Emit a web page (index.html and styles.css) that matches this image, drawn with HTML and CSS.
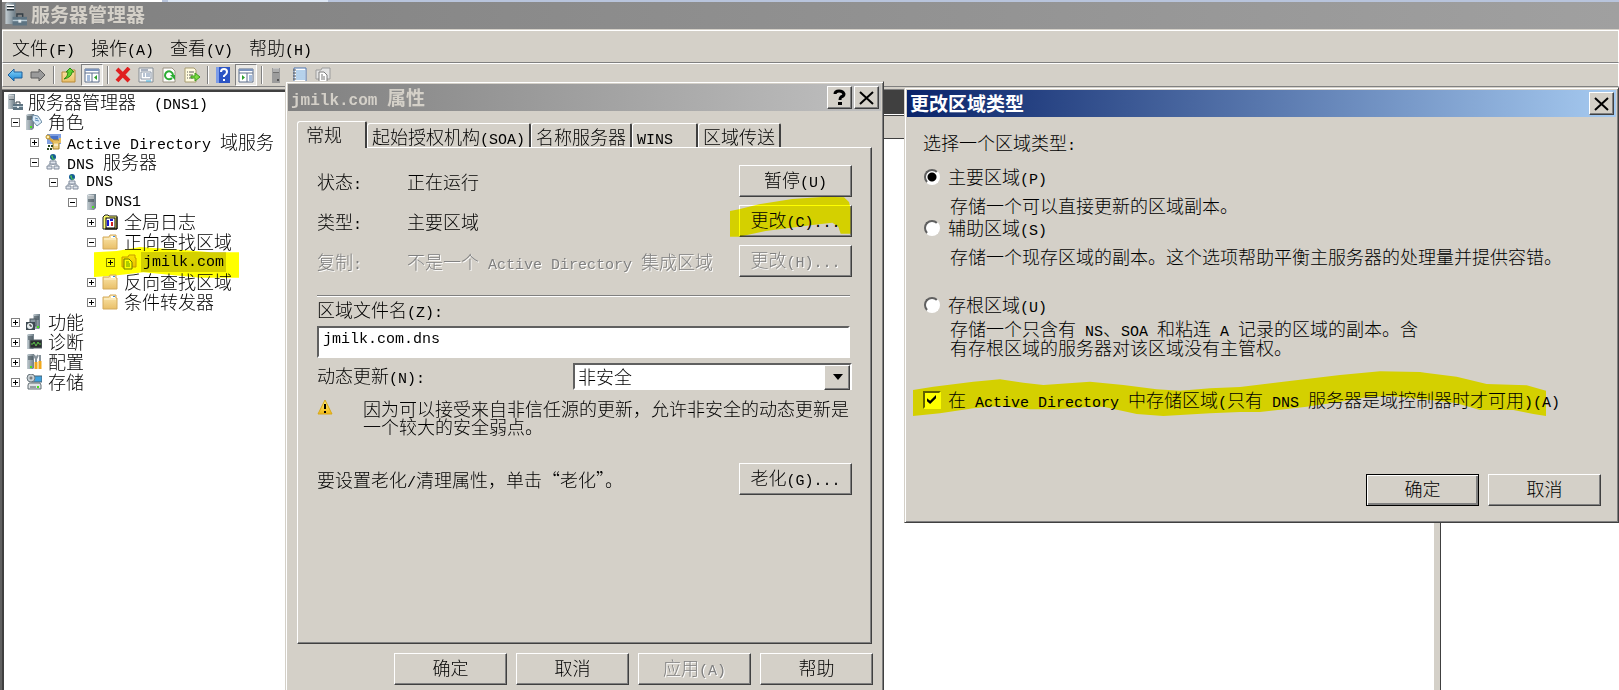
FILE: index.html
```html
<!DOCTYPE html>
<html lang="zh-CN">

<head>
    <meta charset="utf-8">
    <title>服务器管理器</title>
    <link rel="stylesheet" href="styles.css">
</head>

<body>

<!-- shared icons -->
<svg class="defs" width="0" height="0">
    <defs>
        <linearGradient id="gsrv" x1="0" x2="1"><stop offset="0" stop-color="#c3cdd2"/><stop offset="1" stop-color="#6c7c86"/></linearGradient>
        <linearGradient id="gfold" x1="0" y1="0" x2="0" y2="1"><stop offset="0" stop-color="#fbe7ae"/><stop offset="1" stop-color="#e9bf68"/></linearGradient>
        <linearGradient id="gblue" x1="0" y1="0" x2="0" y2="1"><stop offset="0" stop-color="#8fdcff"/><stop offset="1" stop-color="#1480d0"/></linearGradient>
        <linearGradient id="gwarn" x1="0" y1="0" x2="0" y2="1"><stop offset="0" stop-color="#fff27a"/><stop offset="1" stop-color="#f0b818"/></linearGradient>
        <symbol id="server" viewBox="0 0 16 16">
            <path d="M4 1l2-1h7v14l-2 2H4z" fill="url(#gsrv)"/>
            <path d="M5 3h6M5 5h6M5 7h6" stroke="#37444c"/>
            <path d="M5 2h6M5 4h6" stroke="#fff"/>
            <rect x="9" y="12" width="2" height="2" fill="#49e020"/>
        </symbol>
        <symbol id="manager" viewBox="0 0 16 16">
            <path d="M1 1l1-1h6v14l-1 1H1z" fill="url(#gsrv)"/>
            <path d="M2 3h5M2 5h5" stroke="#26333b"/>
            <path d="M2 2h5M2 4h5" stroke="#fff"/>
            <path d="M9 10V8h4v2" fill="none" stroke="#333e46"/>
            <rect x="6" y="10" width="10" height="6" fill="#5e7482"/>
            <path d="M6 12.500h10" stroke="#b6c8d2"/>
            <rect x="10" y="12" width="2" height="2" fill="#e8eef0"/>
        </symbol>
        <symbol id="role" viewBox="0 0 16 16">
            <path d="M0 1l2-1h6v14l-2 2H0z" fill="url(#gsrv)"/>
            <path d="M1 3h5M1 5h5" stroke="#37444c"/>
            <path d="M7 1l5 1 4 6-5 4-5-6z" fill="#dcecf8" stroke="#6d8ca4"/>
            <path d="M9 4l3 1M9 6l4 1" stroke="#5b8cb8"/>
            <rect x="4" y="12" width="2" height="2" fill="#49e020"/>
        </symbol>
        <symbol id="ad" viewBox="0 0 16 16">
            <rect x="2" y="0" width="14" height="10" fill="#7f9fe0"/>
            <path d="M5 2h8v4H7z" fill="#4570c8"/>
            <path d="M8 6h6v9H8z" fill="#eed28a" stroke="#a88228"/>
            <path d="M6 5l3 3h6V4" stroke="#e8c060" stroke-width="2" fill="none"/>
            <path d="M3 3l5 5" stroke="#dba43a" stroke-width="2"/>
            <circle cx="3" cy="3" r="2" fill="#fff0b0" stroke="#b98a20"/>
            <path d="M9 11h4" stroke="#fff"/>
            <path d="M3 11h2v2H3zM6 11h2v2H6zM2 14h2v2H2zM5 14h2v2H5z" fill="#2c4a24"/>
        </symbol>
        <symbol id="dns" viewBox="0 0 16 16">
            <path d="M8 6v5M4 12v-2h8v2" stroke="#8b97a6" fill="none"/>
            <circle cx="8" cy="3" r="3" fill="#145c94"/>
            <path d="M6 2q2-2 2 1t2 1q0 2-2 2z" fill="#4cc050"/>
            <path d="M5 7h6v3H5zM2 12h5v3H2zM9 12h5v3H9z" fill="#dfe4ec" stroke="#818c9c"/>
        </symbol>
        <symbol id="log" viewBox="0 0 16 16">
            <path d="M1 3l2-2h3l1 1h8v13H1z" fill="#ffff70" stroke="#222"/>
            <rect x="4" y="4" width="9" height="10" fill="#fff" stroke="#000"/>
            <path d="M6 6v6M8 6h3" stroke="#1a1ad0" stroke-width="2"/>
            <path d="M10 8v4" stroke="#d02020" stroke-width="2"/>
            <path d="M15 3v12H3" stroke="#000" fill="none"/>
        </symbol>
        <symbol id="folder" viewBox="0 0 16 16">
            <path d="M1 3h6l1-2h6v3h1v11H1z" fill="url(#gfold)" stroke="#d3aa5c"/>
            <path d="M9 2h4v2H9z" fill="#fff"/>
            <path d="M11 2h2v1h-2z" fill="#3c8ce0"/>
            <path d="M2 5h12" stroke="#fff6d8"/>
        </symbol>
        <symbol id="zone" viewBox="0 0 16 16">
            <path d="M1 3h6l1-2h6v3h1v9H1z" fill="url(#gfold)" stroke="#c79a48"/>
            <path d="M3 5h5l3 3v7H3z" fill="#fff" stroke="#6d7a58"/>
            <path d="M5 8h3M5 10h4M5 12h4" stroke="#5b9a60"/>
        </symbol>
        <symbol id="feature" viewBox="0 0 16 16">
            <path d="M7 1l1-1h6v14l-1 1H7z" fill="url(#gsrv)"/>
            <path d="M8 3h5M8 5h5" stroke="#37444c"/>
            <rect x="4" y="5" width="6" height="7" fill="#8d9aa2" stroke="#4a565e"/>
            <rect x="0" y="8" width="9" height="8" fill="#3e4a52"/>
            <circle cx="4" cy="12" r="3" fill="#e8eef0"/>
            <path d="M4 10v2h2" stroke="#222" fill="none"/>
            <rect x="11" y="12" width="2" height="2" fill="#49e020"/>
        </symbol>
        <symbol id="diag" viewBox="0 0 16 16">
            <path d="M1 1l1-1h6v14l-1 1H1z" fill="url(#gsrv)"/>
            <path d="M2 3h5M2 5h5" stroke="#37444c"/>
            <rect x="4" y="6" width="12" height="8" fill="#2a2f30" stroke="#59646a"/>
            <path d="M5 10h2l1-2 2 4 2-4 1 2h2" stroke="#5cc04c" fill="none"/>
        </symbol>
        <symbol id="config" viewBox="0 0 16 16">
            <path d="M1 1l1-1h6v14l-1 1H1z" fill="url(#gsrv)"/>
            <path d="M2 3h5M2 5h5" stroke="#37444c"/>
            <path d="M8 1l2 4M12 1l-2 4v3M14 1v6" stroke="#87939b" stroke-width="2" fill="none"/>
            <path d="M10 8v7M14 7v8" stroke="#f0a81c" stroke-width="3"/>
            <rect x="4" y="12" width="2" height="2" fill="#49e020"/>
        </symbol>
        <symbol id="storage" viewBox="0 0 16 16">
            <rect x="6" y="2" width="10" height="6" fill="#3fa0dc" stroke="#4c6474"/>
            <circle cx="5" cy="4" r="4" fill="#c8d0d4" stroke="#6c787e"/>
            <circle cx="5" cy="4" r="1" fill="#fff" stroke="#555"/>
            <path d="M3 9h11l1 2v4H2v-4z" fill="#dfe3e5" stroke="#606c72"/>
            <path d="M4 13h6" stroke="#4a565c"/>
            <rect x="11" y="12" width="2" height="2" fill="#49e020"/>
        </symbol>
        <symbol id="close" viewBox="0 0 17 14">
            <path d="M2 1l13 12M15 1L2 13" stroke="#000" stroke-width="2"/>
        </symbol>
    </defs>
</svg>

<div class="manager">
    <div class="tabstrip"><i></i><i></i></div>

    <header class="caption">
        <svg class="appicon"><use href="#manager"/></svg>
        <h1>服务器管理器</h1>
    </header>

    <nav class="menu">
        <button>文件<span class="en">(F)</span></button>
        <button>操作<span class="en">(A)</span></button>
        <button>查看<span class="en">(V)</span></button>
        <button>帮助<span class="en">(H)</span></button>
    </nav>

    <div class="toolbar">
        <button aria-label="后退"><svg viewBox="0 0 16 16"><path d="M1 8l6-6v3h8v6H7v3z" fill="url(#gblue)" stroke="#1d5f9c"/></svg></button>
        <button aria-label="前进"><svg viewBox="0 0 16 16"><path d="M15 8L9 2v3H1v6h8v3z" fill="#9a9a9a" stroke="#5c5c5c"/></svg></button>
        <hr>
        <button aria-label="上移"><svg viewBox="0 0 16 16"><path d="M1 5h5l1-2h7v12H1z" fill="url(#gfold)" stroke="#b88a3a"/><path d="M3 12q4-2 4-7H5l4-4 4 4h-2q0 5-8 7z" fill="#5fd030" stroke="#2e8a14"/></svg></button>
        <button class="down" aria-label="控制台树"><svg viewBox="0 0 16 16"><path d="M1 2h14v13H1z" fill="#fff" stroke="#5c6e8c"/><path d="M1 3h14" stroke="#7c94bc" stroke-width="2"/><path d="M1 6h14M8 6v9" stroke="#5c6e8c"/><path d="M3 9h3M3 11h3M3 13h3" stroke="#4a78b8"/><path d="M13 8v5l-3-2.500z" fill="#2ca02c"/></svg></button>
        <hr>
        <button aria-label="删除"><svg viewBox="0 0 16 16"><path d="M2 2l12 12M14 1L2 14" stroke="#e02020" stroke-width="4"/></svg></button>
        <button aria-label="属性"><svg viewBox="0 0 16 16"><path d="M1 1h14v14H1z" fill="#f4f4f4" stroke="#848c94"/><path d="M3 3h7" stroke="#5c6e8c"/><path d="M3 5h10v7H3z" fill="#fff" stroke="#8c98a8"/><path d="M5 7h2M8 7h4M5 9h2M8 9h4" stroke="#7088a8"/><path d="M8 14h5" stroke="#38b0e0"/></svg></button>
        <button aria-label="刷新"><svg viewBox="0 0 16 16"><path d="M2 1h9l3 3v11H2z" fill="#fff" stroke="#9c9484"/><path d="M11 11a4 4 0 1 1 1-3" fill="none" stroke="#2cac34" stroke-width="2"/><path d="M9 8h5v5z" fill="#2cac34"/></svg></button>
        <button aria-label="导出列表"><svg viewBox="0 0 16 16"><path d="M1 1h9l2 2v12H1z" fill="#fffbe0" stroke="#a89c70"/><path d="M3 5h1M5 5h5M3 8h1M5 8h4M3 11h1M5 11h4" stroke="#5c5c5c"/><path d="M7 9h4V6l5 4-5 4v-3H7z" fill="#7cdc40" stroke="#3c9c1c"/></svg></button>
        <hr>
        <button aria-label="帮助"><svg viewBox="0 0 16 16"><path d="M1 0h14v16H1z" fill="#2c54c4"/><path d="M1 0h3v16H1z" fill="#7c9ce8"/><path d="M6 5q0-3 3-3t3 3q0 2-3 4v1" fill="none" stroke="#fff" stroke-width="2"/><path d="M8 12h2v2H8z" fill="#fff"/></svg></button>
        <button class="down" aria-label="操作窗格"><svg viewBox="0 0 16 16"><path d="M1 2h14v13H1z" fill="#fff" stroke="#5c6e8c"/><path d="M1 3h14" stroke="#7c94bc" stroke-width="2"/><path d="M1 6h14M9 6v9" stroke="#5c6e8c"/><path d="M11 9h3M11 11h3M11 13h3" stroke="#4a78b8"/><path d="M4 8v5l3-2.500z" fill="#2ca02c"/></svg></button>
        <hr>
        <button aria-label="服务器"><svg viewBox="0 0 16 16"><path d="M3 1h8v15H3z" fill="#9c9c9c"/><path d="M4 3h6M4 5h6" stroke="#444"/><path d="M4 2h6M4 4h6" stroke="#eee"/><path d="M8 12h2v2H8z" fill="#555"/></svg></button>
        <button aria-label="记录"><svg viewBox="0 0 16 16"><path d="M2 1h12v14H2z" fill="#fff" stroke="#4c74b0"/><path d="M4 4h9M4 6h9M4 8h9M4 10h9M4 12h9" stroke="#6ca4d8"/><path d="M1 3h3M1 6h3M1 9h3M1 12h3" stroke="#555"/></svg></button>
        <button aria-label="新建区域"><svg viewBox="0 0 16 16"><path d="M1 3h5l1-2h8v11H1z" fill="#e4e4e4" stroke="#9c9c9c"/><path d="M4 5h5l3 3v7H4z" fill="#fff" stroke="#7c7c7c"/><path d="M6 8h2M6 10h4M6 12h4" stroke="#777"/></svg></button>
    </div>

    <main class="panes">
        <div class="treepane">
            <div class="row root"><svg><use href="#manager"/></svg><span>服务器管理器<span class="en">  (DNS1)</span></span></div>
            <ul class="tree">
                <li>
                    <div class="row"><b class="box"></b><svg><use href="#role"/></svg><span>角色</span></div>
                    <ul>
                        <li><div class="row"><b class="box plus"></b><svg><use href="#ad"/></svg><span><span class="en">Active Directory </span>域服务</span></div></li>
                        <li>
                            <div class="row"><b class="box"></b><svg><use href="#dns"/></svg><span><span class="en">DNS </span>服务器</span></div>
                            <ul>
                                <li>
                                    <div class="row"><b class="box"></b><svg><use href="#dns"/></svg><span class="en">DNS</span></div>
                                    <ul>
                                        <li>
                                            <div class="row"><b class="box"></b><svg><use href="#server"/></svg><span class="en">DNS1</span></div>
                                            <ul>
                                                <li><div class="row"><b class="box plus"></b><svg><use href="#log"/></svg><span>全局日志</span></div></li>
                                                <li>
                                                    <div class="row"><b class="box"></b><svg><use href="#folder"/></svg><span>正向查找区域</span></div>
                                                    <ul>
                                                        <li>
                                                            <div class="row"><b class="box plus"></b><svg><use href="#zone"/></svg><span class="en selected">jmilk.com</span>
                                                                <svg class="marker mark-tree" viewBox="0 0 435 93"><path d="M0 16l68-4 70-12 140 10 72 6h85v76H318l-170-16-90 10-58 4z"/></svg>
                                                            </div>
                                                        </li>
                                                    </ul>
                                                </li>
                                                <li><div class="row"><b class="box plus"></b><svg><use href="#folder"/></svg><span>反向查找区域</span></div></li>
                                                <li><div class="row"><b class="box plus"></b><svg><use href="#folder"/></svg><span>条件转发器</span></div></li>
                                            </ul>
                                        </li>
                                    </ul>
                                </li>
                            </ul>
                        </li>
                    </ul>
                </li>
                <li><div class="row"><b class="box plus"></b><svg><use href="#feature"/></svg><span>功能</span></div></li>
                <li><div class="row"><b class="box plus"></b><svg><use href="#diag"/></svg><span>诊断</span></div></li>
                <li><div class="row"><b class="box plus"></b><svg><use href="#config"/></svg><span>配置</span></div></li>
                <li><div class="row"><b class="box plus"></b><svg><use href="#storage"/></svg><span>存储</span></div></li>
            </ul>
        </div>
        <div class="list">
            <div class="listtitle"></div>
            <div class="listhead"></div>
        </div>
        <div class="actions"></div>
    </main>
</div>

<!-- zone properties -->
<section class="dialog props">
    <header class="bar inactive">
        <h2><span class="en">jmilk.com </span>属性</h2>
        <button class="sys" aria-label="帮助"><svg viewBox="0 0 17 17"><path d="M4 5q0-3 4-3t5 3q0 2-3 3-1 1-1 3" fill="none" stroke="#000" stroke-width="3"/><path d="M7 13h4v3H7z"/></svg></button>
        <button class="sys" aria-label="关闭"><svg><use href="#close"/></svg></button>
    </header>

    <div class="tabs">
        <button class="tab active">常规</button>
        <button class="tab">起始授权机构<span class="en">(SOA)</span></button>
        <button class="tab">名称服务器</button>
        <button class="tab wins"><span class="en">WINS</span></button>
        <button class="tab">区域传送</button>
    </div>

    <div class="page">
        <div class="info">
            <span>状态<span class="en">:</span></span><span>正在运行</span>
            <button class="btn">暂停<span class="en">(U)</span></button>
            <span>类型<span class="en">:</span></span><span>主要区域</span>
            <span class="marked">
                <button class="btn">更改<span class="en">(C)...</span></button>
                <svg class="marker mark-btn" viewBox="0 0 366 126"><path d="M0 45l27-5 60-15L187 9l100-7 55 2 15 14 5 20v75h-30l-7-21-18-12-60 7-140 18-80 17H0z"/></svg>
            </span>
            <span class="off">复制<span class="en">:</span></span><span class="off">不是一个<span class="en"> Active Directory </span>集成区域</span>
            <button class="btn" disabled>更改<span class="en">(H)...</span></button>
        </div>
        <hr class="rule">
        <label for="zonefile">区域文件名<span class="en">(Z):</span></label>
        <input id="zonefile" class="field" type="text" value="jmilk.com.dns">
        <div class="line">
            <label for="dyn">动态更新<span class="en">(N):</span></label>
            <span class="combo"><select id="dyn"><option>非安全</option></select></span>
        </div>
        <div class="warn">
            <svg viewBox="0 0 16 16"><path d="M8 1l7 14H1z" fill="url(#gwarn)" stroke="#d8a818" stroke-linejoin="round"/><path d="M7 5h2v5H7zM7 12h2v2H7z"/></svg>
            <p>因为可以接受来自非信任源的更新，允许非安全的动态更新是一个较大的安全弱点。</p>
        </div>
        <div class="line aging">
            <span>要设置老化<span class="en">/</span>清理属性，单击“老化”。</span>
            <button class="btn">老化<span class="en">(G)...</span></button>
        </div>
    </div>

    <footer class="buttons">
        <button class="btn">确定</button>
        <button class="btn">取消</button>
        <button class="btn" disabled>应用<span class="en">(A)</span></button>
        <button class="btn">帮助</button>
    </footer>
</section>

<!-- change zone type -->
<section class="dialog type">
    <header class="bar">
        <h2>更改区域类型</h2>
        <button class="sys" aria-label="关闭"><svg><use href="#close"/></svg></button>
    </header>
    <form class="choices">
        <p class="ask">选择一个区域类型<span class="en">:</span></p>
        <label class="opt"><input type="radio" name="zt" checked><span>主要区域<span class="en">(P)</span></span></label>
        <p class="desc">存储一个可以直接更新的区域副本。</p>
        <label class="opt"><input type="radio" name="zt"><span>辅助区域<span class="en">(S)</span></span></label>
        <p class="desc second">存储一个现存区域的副本。这个选项帮助平衡主服务器的处理量并提供容错。</p>
        <label class="opt"><input type="radio" name="zt"><span>存根区域<span class="en">(U)</span></span></label>
        <p class="desc third">存储一个只含有<span class="en"> NS</span>、<span class="en">SOA </span>和粘连<span class="en"> A </span>记录的区域的副本。含<br>有存根区域的服务器对该区域没有主管权。</p>
        <label class="opt store"><input type="checkbox" checked><span>在<span class="en"> Active Directory </span>中存储区域<span class="en">(</span>只有<span class="en"> DNS </span>服务器是域控制器时才可用<span class="en">)(A)</span></span>
            <svg class="marker mark-store" viewBox="0 0 1899 141"><path d="M0 60L61 50 181 35 261 28 331 38 391 45 531 35 631 45 731 58 801 62 891 55 981 51 1111 35 1281 15 1401 4 1521 6 1631 20 1721 42 1841 46 1899 62V138L1861 132 1801 120H1701L1631 100 1551 90 1431 78 1361 82 1281 95 1181 110 1041 126H981L891 130 751 138 671 132 571 110 511 112 431 118H351L261 108 181 115 81 130 0 138z"/></svg>
        </label>
        <div class="buttons">
            <button type="button" class="btn default">确定</button>
            <button type="button" class="btn">取消</button>
        </div>
    </form>
</section>

</body>

</html>
```
FILE: styles.css
```css
*{
    box-sizing: border-box;
}
body{
    margin: 0;
    height: 100vh;
    overflow: hidden;
    position: relative;
    background: #d4d0c8;
    color: #000;
    font: 300 18px/20px "Noto Sans CJK SC", sans-serif;
}
h1, h2, p, ul{
    margin: 0;
    padding: 0;
}
button, input, select{
    font: inherit;
    color: inherit;
    margin: 0;
    border-radius: 0;
}
svg{
    display: block;
    flex: none;
    width: 16px;
    height: 16px;
}
.defs{
    position: absolute;
    width: 0;
    height: 0;
}
/* half-width text, short line box so it never stretches a CJK line */
.en{
    font-family: "Liberation Mono", monospace;
    font-size: 15px;
    line-height: 10px;
    white-space: pre;
}

/* main window */
.manager{
    height: 100%;
    display: flex;
    flex-direction: column;
    border-left: 2px solid #606060;
}
.tabstrip{
    display: flex;
    gap: 6px;
    height: 2px;
    background: #b8c4dc;
}
.tabstrip i{
    width: 160px;
    background: #fff;
}
.tabstrip i + i{
    background: #dce6f4;
}
.caption{
    display: flex;
    align-items: center;
    gap: 4px;
    height: 28px;
    padding: 0 0 3px 2px;
    background: linear-gradient(to right, #808080, #a0a0a0);
    color: #d4d0c8;
    border-bottom: 1px solid #d4d0c8;
}
.caption h1{
    font-size: 19px;
    line-height: 24px;
}
.appicon{
    width: 23px;
    height: 24px;
}
.menu{
    display: flex;
    gap: 16px;
    height: 33px;
    padding: 0 9px;
    border: 1px solid #fff;
    border-bottom-color: #808080;
}
.menu button{
    padding: 0;
    border: 0;
    background: none;
}
.toolbar{
    display: flex;
    align-items: center;
    gap: 7px;
    height: 24px;
    padding-left: 4px;
    border: 1px solid #fff;
    border-bottom-color: #808080;
}
.toolbar button{
    padding: 0;
    border: 0;
    background: none;
}
.toolbar .down{
    margin: 0 -3px;
    padding: 2px;
    border: 1px solid #fff;
    border-top-color: #808080;
    border-left-color: #808080;
    background: #eae8e4;
}
.toolbar hr{
    width: 2px;
    height: 18px;
    margin: 0 -1px 0 0;
    border: 0;
    border-left: 1px solid #808080;
    border-right: 1px solid #fff;
}
.panes{
    flex: 1;
    min-height: 0;
    display: grid;
    grid-template-columns: 283px 1fr 179px;
    margin-top: 2px;
    border-top: 1px solid #808080;
}
.treepane{
    padding-left: 3px;
    background: #fff;
    border: 2px solid #404040;
    border-width: 2px 0 0 2px;
}
.tree, .tree ul{
    list-style: none;
}
.tree{
    padding-left: 4px;
}
.tree ul{
    padding-left: 19px;
}
.row{
    position: relative;
    display: flex;
    align-items: center;
    gap: 6px;
    height: 20px;
    white-space: nowrap;
}
.row > span, .opt > span{
    padding-bottom: 2px;
}
.row > .en{
    padding: 2px 0 0;
    line-height: 18px;
}
.root{
    gap: 5px;
}
.box{
    width: 9px;
    height: 9px;
    border: 1px solid #808080;
    background: linear-gradient(#000, #000) center / 5px 1px no-repeat;
}
.plus{
    background: linear-gradient(#000, #000) center / 5px 1px no-repeat, linear-gradient(#000, #000) center / 1px 5px no-repeat;
}
.row > .selected{
    margin-left: -2px;
    padding: 2px 2px 0;
    background: #d4d0c8;
}
.list{
    background: #fff;
    border-right: 6px solid #d4d0c8;
}
.listtitle{
    height: 25px;
    background: #404040;
    border-bottom: 1px solid #fff;
}
.listhead{
    height: 24px;
    background: #d4d0c8;
    border-top: 1px solid #404040;
    border-bottom: 1px solid #404040;
}
.actions{
    background: #fff;
    border-left: 1px solid #404040;
}

/* highlighter strokes */
.marker{
    position: absolute;
    fill: #ff0;
    mix-blend-mode: multiply;
    pointer-events: none;
}
.mark-tree{
    left: -12px;
    top: -5px;
    width: 145px;
    height: 31px;
}
.mark-btn{
    left: -9px;
    top: -9px;
    width: 122px;
    height: 42px;
}
.mark-store{
    left: -10px;
    top: -20px;
    width: 633px;
    height: 47px;
}

/* dialogs */
.dialog{
    position: absolute;
    background: #d4d0c8;
    border: 1px solid #d4d0c8;
    border-right-color: #404040;
    border-bottom-color: #404040;
    box-shadow: inset 1px 1px #fff, inset -1px -1px #808080;
    padding: 2px;
}
.props{
    left: 285px;
    top: 81px;
    width: 599px;
    height: 640px;
}
.type{
    left: 904px;
    right: 0;
    top: 87px;
}
.bar{
    display: flex;
    align-items: center;
    gap: 2px;
    height: 27px;
    padding: 0 2px 0 3px;
    background: linear-gradient(to right, #0a246a, #a6caf0);
    color: #fff;
}
.bar h2{
    flex: 1;
    padding-bottom: 2px;
    font-size: 19px;
    line-height: 24px;
}
.bar .en{
    font-size: 16px;
}
.inactive{
    background: linear-gradient(to right, #808080, #c0c0c0);
    color: #d4d0c8;
}
.sys{
    display: flex;
    align-items: center;
    justify-content: center;
    width: 25px;
    height: 23px;
    padding: 0;
}
.sys svg{
    width: 17px;
    height: 14px;
}
.inactive .sys:not(:last-child) svg{
    height: 17px;
}
.sys, .btn{
    background: #d4d0c8;
    border: 1px solid #fff;
    border-right-color: #404040;
    border-bottom-color: #404040;
    box-shadow: inset -1px -1px #808080;
}
.btn{
    width: 113px;
    height: 32px;
    padding: 0 0 4px;
}
.btn:disabled, .off{
    color: #808080;
    text-shadow: 1px 1px #fff;
}
.btn.default{
    border-color: #000;
    box-shadow: inset 1px 1px #fff, inset -2px -2px #808080;
}
.buttons{
    display: flex;
    justify-content: flex-end;
    gap: 9px;
}

/* properties */
.tabs{
    display: flex;
    align-items: flex-end;
    margin: 10px 9px 0;
}
.tab{
    height: 24px;
    padding: 0 4px;
    background: #d4d0c8;
    border: 1px solid #fff;
    border-right: 2px solid #404040;
    border-bottom: 0;
    border-radius: 3px 2px 0 0;
    white-space: nowrap;
}
.tab.active{
    height: 27px;
    width: 70px;
    margin-bottom: -1px;
    padding: 0 8px 3px;
    text-align: left;
}
.wins{
    width: 66px;
    text-align: left;
}
.page{
    height: 497px;
    margin: 0 9px;
    padding: 17px 19px 0;
    border: 1px solid #fff;
    border-right-color: #404040;
    border-bottom-color: #404040;
    box-shadow: inset -1px -1px #808080;
}
.info{
    display: grid;
    grid-template-columns: 90px 1fr 113px;
    row-gap: 8px;
    align-items: center;
    white-space: nowrap;
}
.marked{
    position: relative;
}
.marked .btn{
    display: block;
}
.rule{
    margin: 18px 2px 2px 0;
    border: 0;
    border-top: 1px solid #808080;
    border-bottom: 1px solid #fff;
}
.page label{
    display: block;
}
.field{
    width: calc(100% - 2px);
    height: 32px;
    margin-top: 7px;
    padding: 0 4px 6px;
    font: 15px/20px "Liberation Mono", monospace;
}
.field, .combo{
    display: block;
    background: #fff;
    border: 2px solid;
    border-color: #606060 #fff #fff #606060;
}
.line{
    display: flex;
    justify-content: space-between;
    align-items: center;
    margin-top: 5px;
}
.line label{
    padding-bottom: 4px;
}
.combo{
    position: relative;
    width: 279px;
    height: 27px;
}
.combo select{
    appearance: none;
    display: block;
    width: 100%;
    height: 100%;
    padding: 0 3px 2px;
    border: 0;
    background: none;
    line-height: 20px;
}
.combo::after{
    content: "";
    position: absolute;
    right: 0;
    top: 0;
    width: 24px;
    height: 23px;
    border: 1px solid #fff;
    border-right-color: #404040;
    border-bottom-color: #404040;
    background: #d4d0c8;
    box-shadow: inset -1px -1px #808080;
    pointer-events: none;
}
.combo::before{
    content: "";
    position: absolute;
    z-index: 1;
    right: 7px;
    top: 9px;
    border: 5px solid transparent;
    border-top: 6px solid #000;
    border-bottom: 0;
    pointer-events: none;
}
.warn{
    display: flex;
    gap: 30px;
    margin-top: 9px;
    line-height: 18px;
}
.aging{
    margin-top: 28px;
}
.props .buttons{
    margin: 9px 8px 0;
}

/* zone type */
.choices{
    padding: 15px 15px 14px 16px;
}
.ask{
    margin-bottom: 15px;
}
.opt{
    position: relative;
    display: flex;
    align-items: center;
    gap: 8px;
    height: 20px;
    white-space: nowrap;
}
.desc{
    padding-left: 27px;
    margin: 9px 0 4px;
    line-height: 18px;
}
.second{
    margin-bottom: 30px;
}
.third{
    margin: 4px 0 34px;
}
.opt input{
    appearance: none;
    flex: none;
    width: 16px;
    height: 16px;
    margin: 0 0 0 1px;
    background: #fff;
    border: 2px solid;
    border-color: #606060 #fff #fff #606060;
}
.opt input[type=radio]{
    border-radius: 50%;
}
.opt input[type=radio]:checked{
    background: radial-gradient(circle, #000 4px, #fff 5px);
}
.opt input[type=checkbox]{
    width: 18px;
    height: 18px;
    margin: 0 -1px 0 0;
}
.opt input[type=checkbox]:checked::before{
    content: "";
    display: block;
    width: 9px;
    height: 9px;
    margin: 2px;
    background: #000;
    clip-path: polygon(0 35%, 35% 65%, 100% 0, 100% 35%, 35% 100%, 0 70%);
}
.store{
    width: fit-content;
}
.choices .buttons{
    margin-top: 64px;
}
```
